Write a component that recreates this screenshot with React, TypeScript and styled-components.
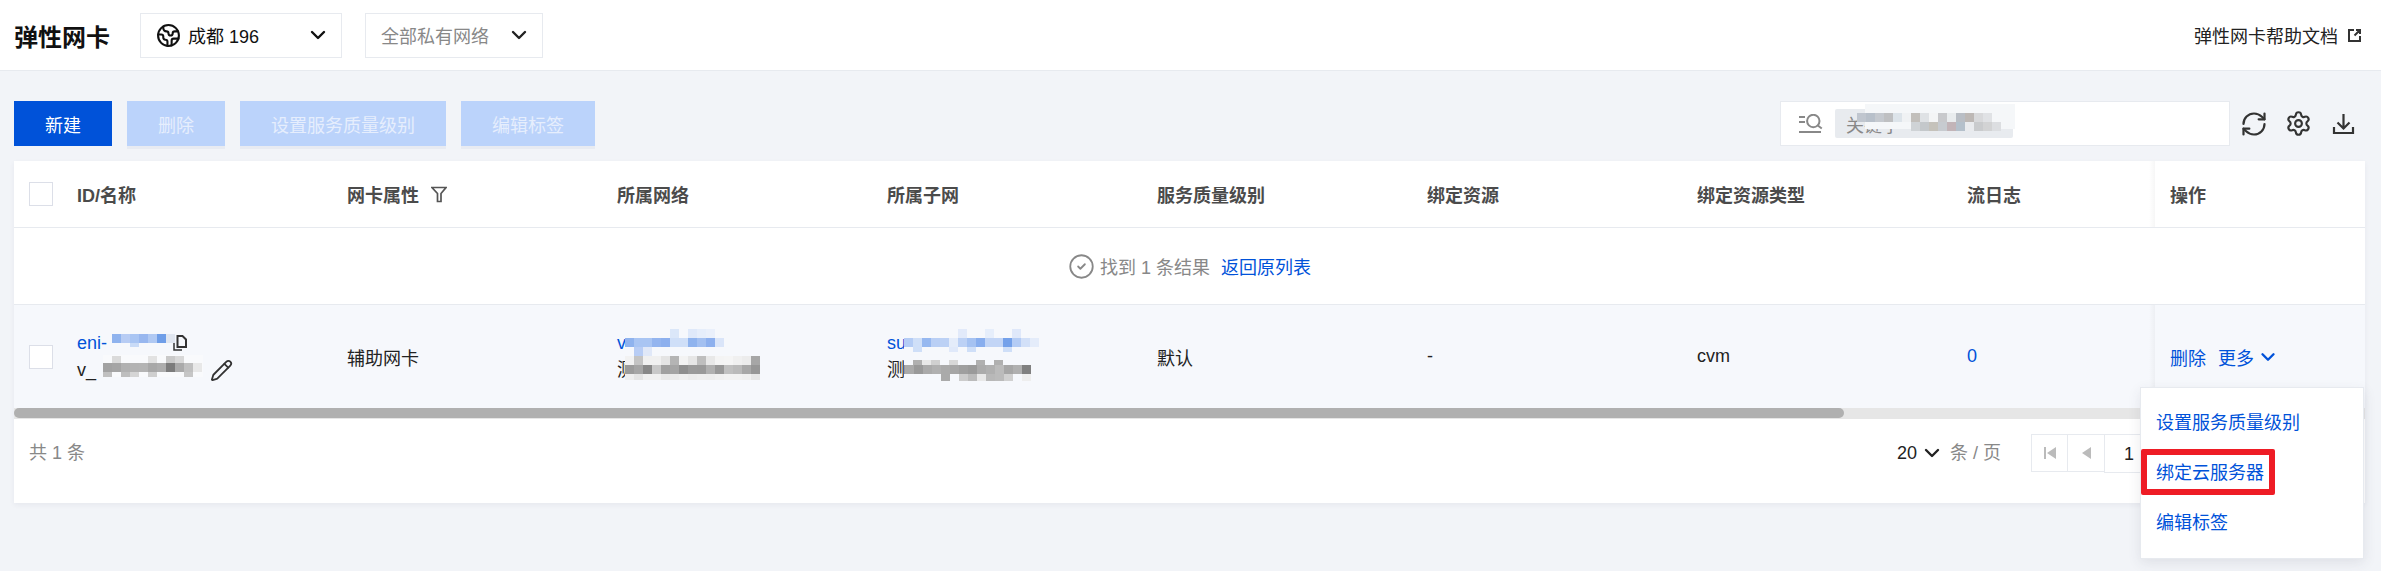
import styled, { createGlobalStyle } from 'styled-components';
import { ChevronDown, CircleCheck, Earth, Pencil, RefreshCw, Settings } from 'lucide-react';

const GlobalStyle = createGlobalStyle`
  html, body {
    margin: 0;
    padding: 0;
    height: 571px;
    overflow: hidden;
    background: #f2f4f8;
    font-family: "Liberation Sans", "Noto Sans CJK SC", sans-serif;
    font-size: 18px;
    color: #222;
  }
`

const Header = styled.header`
  display: flex;
  align-items: center;
  height: 70px;
  padding: 0 20px 0 14px;
  background: #fff;
  border-bottom: 1px solid #e7eaef;
`

const Title = styled.h1`
  margin: 0 30px 0 0;
  font-size: 24px;
  font-weight: 700;
  color: #111;
`

const Select = styled.div<{ $width: number; $muted?: boolean }>`
  display: flex;
  align-items: center;
  justify-content: space-between;
  box-sizing: border-box;
  width: ${p => p.$width}px;
  height: 45px;
  margin-right: 23px;
  padding: 0 11px 0 15px;
  background: #fff;
  border: 1px solid #e7eaef;
  color: ${p => (p.$muted ? '#888' : '#111')};
`

const SelectLabel = styled.span`
  display: flex;
  align-items: center;
  gap: 7px;
`

const HelpLink = styled.a`
  display: flex;
  align-items: center;
  gap: 10px;
  margin-left: auto;
  color: #222;
`

const Main = styled.main`
  padding: 30px 16px 0 14px;
`

const Toolbar = styled.div`
  display: flex;
  justify-content: space-between;
  margin-bottom: 15px;
`

const ButtonGroup = styled.div`
  display: flex;
  gap: 15px;
`

const Button = styled.button<{ $width: number; $disabled?: boolean }>`
  width: ${p => p.$width}px;
  height: 45px;
  padding: 0;
  border: 0;
  font: inherit;
  color: ${p => (p.$disabled ? '#e6eefd' : '#fff')};
  background: ${p => (p.$disabled ? '#bbd3fb' : '#0052d9')};
  box-shadow: ${p => (p.$disabled ? '0 3px 0 #e8ebf2' : 'none')};
`

const ToolRight = styled.div`
  display: flex;
  align-items: center;
  padding-right: 10px;
`

const SearchBox = styled.div`
  position: relative;
  display: flex;
  align-items: center;
  box-sizing: border-box;
  width: 450px;
  height: 45px;
  margin-right: 12px;
  padding-left: 18px;
  background: #fff;
  border: 1px solid #e7eaef;
  color: #888;
`

const SearchPatch = styled.span`
  display: flex;
  align-items: center;
  box-sizing: border-box;
  width: 178px;
  height: 29px;
  margin-left: 12px;
  padding-left: 11px;
  background: #e8ebef;
  border-radius: 2px;
  overflow: hidden;
`

const ToolIcons = styled.div`
  display: flex;
  gap: 22px;
  color: #333;
`

const ToolIcon = styled.span`
  display: flex;
  align-items: center;
  justify-content: center;
  width: 23px;
  height: 23px;

  svg {
    flex: none;
  }
`

const TableCard = styled.section`
  position: relative;
  background: #fff;
  box-shadow: 0 2px 5px rgba(54, 58, 80, 0.06);
`

const GridRow = styled.div<{ $height: number; $tint?: boolean }>`
  display: grid;
  grid-template-columns: 48px repeat(7, 270px) 203px 210px;
  align-items: stretch;
  height: ${p => p.$height}px;
  background: ${p => (p.$tint ? '#f6f8fc' : '#fff')};
`

const BorderedRow = styled(GridRow)`
  border-bottom: 1px solid #e7eaef;
`

const HeadCell = styled.div`
  display: flex;
  align-items: center;
  gap: 12px;
  padding-left: 15px;
  font-weight: 700;
  color: #4b4b4b;
`

const Cell = styled.div`
  display: flex;
  align-items: center;
  padding-left: 15px;
  color: #222;
`

const Stack = styled.div`
  position: relative;
  display: flex;
  flex-direction: column;
  line-height: 27px;
`

const Line = styled.div`
  display: flex;
  align-items: center;
  height: 27px;
`

const Spacer = styled.span<{ $width: number }>`
  display: inline-block;
  width: ${p => p.$width}px;
`

const LinkText = styled.a`
  color: #0052d9;
`

const CheckCell = styled.div`
  display: flex;
  align-items: center;
  padding-left: 15px;
`

const Checkbox = styled.span`
  box-sizing: border-box;
  width: 24px;
  height: 24px;
  background: #fff;
  border: 1px solid #dcdfe8;
`

const FixedCell = styled.div`
  position: relative;
  display: flex;
  align-items: center;
  padding-left: 15px;
  color: #0052d9;

  &::before {
    content: '';
    position: absolute;
    top: 0;
    bottom: 0;
    left: -6px;
    width: 6px;
    background: linear-gradient(to left, rgba(0, 0, 0, 0.035), rgba(0, 0, 0, 0));
  }
`

const FixedHead = styled(FixedCell)`
  font-weight: 700;
  color: #4b4b4b;
`

const ActionLink = styled.a`
  display: flex;
  align-items: center;
  gap: 3px;
  margin-right: 12px;
`

const ResultRow = styled.div`
  display: flex;
  align-items: center;
  justify-content: center;
  height: 76px;
  background: #fff;
  border-bottom: 1px solid #e7eaef;
  color: #888;
`

const ResultText = styled.span`
  margin: 0 11px 0 5px;
`

const ScrollTrack = styled.div`
  height: 11px;
  background: #e6e6e6;
`

const ScrollThumb = styled.div`
  width: 1830px;
  height: 10px;
  background: #b0b0b0;
  border-radius: 5px;
`

const Footer = styled.div`
  display: flex;
  align-items: flex-start;
  box-sizing: border-box;
  justify-content: space-between;
  height: 84px;
  padding: 15px 167px 0 15px;
  color: #888;
  line-height: 38px;
`

const Pager = styled.div`
  display: flex;
  align-items: flex-start;
`

const PageSize = styled.span`
  display: flex;
  align-items: center;
  gap: 3px;
  height: 38px;
  margin-right: 6px;
  color: #222;
`

const PageUnit = styled.span`
  margin-right: 31px;
`

const PageBox = styled.span<{ $width: number; $active?: boolean }>`
  display: flex;
  align-items: center;
  justify-content: center;
  box-sizing: border-box;
  width: ${p => p.$width}px;
  height: ${p => (p.$active ? 39 : 38)}px;
  margin-left: -1px;
  border: 1px solid #e7eaef;
  color: #222;
  background: #fff;

  &:first-of-type {
    margin-left: 0;
  }
`

const PageNumber = styled.span`
  margin-right: 8px;
`

const Menu = styled.div`
  position: absolute;
  top: 226px;
  right: 1px;
  box-sizing: border-box;
  width: 224px;
  height: 172px;
  padding: 10px 0;
  background: #fff;
  border: 1px solid #e7eaef;
  box-shadow: 0 4px 12px rgba(54, 58, 80, 0.1);
  z-index: 2;
`

const MenuItem = styled.div`
  position: relative;
  height: 50px;
  padding-left: 15px;
  line-height: 50px;
  color: #0052d9;
`

const RedBox = styled.span`
  position: absolute;
  top: 1px;
  left: 0;
  box-sizing: border-box;
  width: 134px;
  height: 46px;
  border: 6px solid #ee1c25;
  border-radius: 2px;
`

const MosaicSvg = styled.svg<{ $left: number; $top: number }>`
  position: absolute;
  left: ${p => p.$left}px;
  top: ${p => p.$top}px;
`

type MosaicCell = [number, number, number, number, string]

// a row of 9px blocks starting at col, '' leaves the block out
const strip = (y: number, h: number, col: number, colors: string[]): MosaicCell[] =>
  colors.flatMap((c, i) => (c ? [[col + i * 9, y, 9, h, c] as MosaicCell] : []))

const Mosaic = ({ left, top, width, height, cells }: { left: number; top: number; width: number; height: number; cells: MosaicCell[] }) => (
  <MosaicSvg $left={left} $top={top} width={width} height={height} aria-hidden="true">
    {cells.map(([x, y, w, h, fill], i) => <rect key={i} x={x} y={y} width={w} height={h} fill={fill} />)}
  </MosaicSvg>
)

const searchCells: MosaicCell[] = [
  [84, 2, 150, 25, '#f5f7f9'],
  ...strip(11, 9, 76, ['#c0c6cf', '#b8c0ca', '#c5c9cf', '#bfc0c2', '#dde4ea', '#f0f2f4', '#c2bfbb', '#dfe2e5', '#f4f5f6', '#c8c9cc', '#e9ecee', '#b9bec5', '#bdb8b5', '#d8d9db', '#e0e2e5']),
  ...strip(20, 9, 130, ['#cfd3d6', '#c4c8cb', '#c5c2bb', '#c7cbd0', '#c2b4b8', '#b4c0cb', '#e9ebee', '#c9cbcd', '#d2d3d4', '#dcdee1']),
]

const eniCells: MosaicCell[] = [
  ...strip(4, 9, 0, ['#8fb3ee', '#b7ccf4', '#a9c5f3', '#98b7ef', '#b0c9f3', '#6f9ee8', '#e0e6f0']),
  ...strip(13, 4, 18, ['#c9dbf7']),
]

const nameCells: MosaicCell[] = [
  [0, 0, 100, 22, '#f9fafc'],
  ...strip(1, 7, 9, ['#dadada', '', '', '', '#e2e2e2', '', '#c9c9c9', '#d8d8d8']),
  ...strip(8, 9, 0, ['#a2a2a2', '#a5a5a5', '#b1b1b1', '#b3b3b3', '#b4b4b4', '#a8a8a8', '#adadad', '#7c7c7c', '#aaaaaa', '#c0c0c0', '#e8e8e8']),
  ...strip(17, 5, 0, ['#c0c0c0', '', '#bebebe', '#d5d5d5', '', '#cfcfcf', '', '', '', '#c6c6c6']),
]

const vpcCells: MosaicCell[] = [
  [0, 0, 136, 52, '#f6f8fc'],
  ...strip(0, 9, 45, ['#dbe7f9', '', '#dfe9fa', '#e6eefb', '#eaf0fb']),
  ...strip(9, 9, 0, ['#8fb3ee', '#a9c5f3', '#a9c5f3', '#94b5ef', '#8db0ee', '#cfdff8', '#cfdff8', '#8fb3ee', '#a3c0f1', '#8db0ee', '#dae5f9']),
  ...strip(18, 9, 9, ['#b8cdf5', '#e0e8f8']),
  ...strip(27, 9, 0, ['#f2f2f2', '#c4c4c4', '#f0f0f0', '#f0f0f0', '#e4e4e4', '#b4b4b4', '#f3f3f3', '#e6e6e6', '#bebebe', '#e8e8e8', '#f4f4f4', '#f5f5f5', '#f0f0f0', '#ececec', '#a6a6a6']),
  ...strip(36, 9, 0, ['#9b9b9b', '#a5a5a5', '#888888', '#c8c8c8', '#a0a0a0', '#a5a5a5', '#8f8f8f', '#9a9a9a', '#999999', '#b0b0b0', '#989898', '#c0c0c0', '#bababa', '#a8a8a8', '#969696']),
  ...strip(45, 6, 0, ['#eeeeee', '#e4e4e4', '#f0f0f0', '#f0f0f0', '#e8e8e8', '#ececec', '#f0f0f0', '#ececec', '#eeeeee', '#ededed', '#f0f0f0', '#f2f2f2', '#f2f2f2', '#f0f0f0', '#e6e6e6']),
]

const subnetCells: MosaicCell[] = [
  [0, 0, 136, 52, '#f6f8fc'],
  ...strip(0, 9, 54, ['#e2eafa', '', '', '#e6eefb', '', '', '#dfe8fa']),
  ...strip(9, 9, 0, ['#b4ccf5', '#cfdff8', '#96b8f0', '#b9cff5', '#bcd1f5', '#e4ecfa', '#bcd1f5', '#a5c2f2', '#88aeee', '#c2d5f6', '#c2d5f6', '#74a1ea', '#b4ccf5', '#d2e0f8', '#e4ecfa']),
  ...strip(18, 5, 9, ['#cfdff8', '', '', '', '#e0e9fa', '', '#cfdff8', '', '', '', '#cfdff8']),
  ...strip(31, 5, 9, ['#b0b0b0', '#e8e8e8', '#d0d0d0', '', '#d8d8d8', '', '', '#b0b0b0', '', '#b0b0b0']),
  ...strip(36, 9, -8, ['#999999', '#aaaaaa', '#999999', '#aaaaaa', '#b0b0b0', '#aaaaaa', '#a6a6a6', '#9f9f9f', '#9a9a9a', '#ababab', '#b0b0b0', '#bbbbbb', '#a6a6a6', '#b0b0b0', '#808080']),
  ...strip(45, 7, 37, ['#aaaaaa', '', '#cccccc', '#bbbbbb', '#e8e8e8', '#b8b8b8', '#bbbbbb', '#d0d0d0', '', '#eeeeee']),
]

const SearchIcon = () => (
  <svg width="24" height="20" viewBox="0 0 24 20" fill="none" stroke="#888" strokeWidth="2">
    <path d="M0 3h6M0 8h6M0 18h22" />
    <circle cx="14.3" cy="7" r="6.2" />
    <path d="M18.8 11.5l4 3" />
  </svg>
)

const FilterIcon = () => (
  <svg width="16" height="17" viewBox="0 0 16 17" fill="none" stroke="#555" strokeWidth="1.7">
    <path d="M1 1.500h14l-5 6v8H6.500v-8z" />
  </svg>
)

const ExternalIcon = () => (
  <svg width="13" height="13" viewBox="0 0 13 13" fill="none" stroke="#333" strokeWidth="2">
    <path d="M6 1H1v11h11V7M6.500 6.500L12 1M8 1h4v4" />
  </svg>
)

const CopyIcon = () => (
  <svg width="14" height="16" viewBox="0 0 14 16" fill="none" stroke="#333">
    <path d="M4.500 1h5l3.500 3.500V12H4.500z" strokeWidth="2" />
    <path d="M1 8v7h8" strokeWidth="1.500" />
  </svg>
)

const DownloadIcon = () => (
  <svg width="23" height="23" viewBox="0 0 23 23" fill="none" stroke="#333" strokeWidth="2.200">
    <path d="M11.500 2v14M5.500 10.500l6 6 6-6M2 15v6h19v-6" />
  </svg>
)

const FirstIcon = () => (
  <svg width="12" height="12" viewBox="0 0 12 12" fill="#bbb">
    <rect x="0" y="0" width="2" height="12" />
    <path d="M12 0v12L3 6z" />
  </svg>
)

const PrevIcon = () => (
  <svg width="11" height="12" viewBox="0 0 11 12" fill="#bbb">
    <path d="M10 0v12L1 6z" />
  </svg>
)

const heads = ['网卡属性', '所属网络', '所属子网', '服务质量级别', '绑定资源', '绑定资源类型', '流日志']

function App() {
  return (
    <>
      <GlobalStyle />
      <Header>
        <Title>弹性网卡</Title>
        <Select $width={202}>
          <SelectLabel><Earth size={25} strokeWidth={2} />成都 196</SelectLabel>
          <ChevronDown size={24} strokeWidth={2.4} />
        </Select>
        <Select $width={178} $muted>
          全部私有网络
          <ChevronDown size={24} strokeWidth={2.4} color="#222" />
        </Select>
        <HelpLink>弹性网卡帮助文档<ExternalIcon /></HelpLink>
      </Header>
      <Main>
        <Toolbar>
          <ButtonGroup>
            <Button $width={98}>新建</Button>
            <Button $width={98} $disabled>删除</Button>
            <Button $width={206} $disabled>设置服务质量级别</Button>
            <Button $width={134} $disabled>编辑标签</Button>
          </ButtonGroup>
          <ToolRight>
            <SearchBox>
              <SearchIcon />
              <SearchPatch>关键字</SearchPatch>
              <Mosaic left={0} top={0} width={250} height={43} cells={searchCells} />
            </SearchBox>
            <ToolIcons>
              <ToolIcon><RefreshCw size={28} strokeWidth={1.9} /></ToolIcon>
              <ToolIcon><Settings size={27} strokeWidth={1.9} /></ToolIcon>
              <ToolIcon><DownloadIcon /></ToolIcon>
            </ToolIcons>
          </ToolRight>
        </Toolbar>
        <TableCard>
          <BorderedRow $height={66}>
            <CheckCell><Checkbox /></CheckCell>
            <HeadCell>ID/名称</HeadCell>
            {heads.map((h, i) => (
              <HeadCell key={h}>{h}{i === 0 && <FilterIcon />}</HeadCell>
            ))}
            <FixedHead>操作</FixedHead>
          </BorderedRow>
          <ResultRow>
            <CircleCheck size={27} strokeWidth={1.6} color="#888" />
            <ResultText>找到 1 条结果</ResultText>
            <LinkText>返回原列表</LinkText>
          </ResultRow>
          <GridRow $height={103} $tint>
            <CheckCell><Checkbox /></CheckCell>
            <Cell>
              <Stack>
                <Line><LinkText>eni-</LinkText><Spacer $width={66} /><CopyIcon /></Line>
                <Line>v_<Spacer $width={114} /><Pencil size={23} strokeWidth={1.9} color="#333" /></Line>
                <Mosaic left={35} top={0} width={66} height={20} cells={eniCells} />
                <Mosaic left={26} top={25} width={104} height={24} cells={nameCells} />
              </Stack>
            </Cell>
            <Cell>辅助网卡</Cell>
            <Cell>
              <Stack>
                <Line><LinkText>vpc-</LinkText></Line>
                <Line>测试</Line>
                <Mosaic left={8} top={-1} width={136} height={52} cells={vpcCells} />
              </Stack>
            </Cell>
            <Cell>
              <Stack>
                <Line><LinkText>subnet</LinkText></Line>
                <Line>测试</Line>
                <Mosaic left={17} top={-1} width={136} height={52} cells={subnetCells} />
              </Stack>
            </Cell>
            <Cell>默认</Cell>
            <Cell>-</Cell>
            <Cell>cvm</Cell>
            <Cell><LinkText>0</LinkText></Cell>
            <FixedCell>
              <ActionLink>删除</ActionLink>
              <ActionLink>更多<ChevronDown size={22} strokeWidth={2.6} /></ActionLink>
            </FixedCell>
          </GridRow>
          <ScrollTrack><ScrollThumb /></ScrollTrack>
          <Footer>
            <span>共 1 条</span>
            <Pager>
              <PageSize>20<ChevronDown size={24} strokeWidth={2.4} /></PageSize>
              <PageUnit>条 / 页</PageUnit>
              <PageBox $width={37}><FirstIcon /></PageBox>
              <PageBox $width={38}><PrevIcon /></PageBox>
              <PageBox $width={58} $active><PageNumber>1</PageNumber></PageBox>
              <PageBox $width={37}><PrevIcon /></PageBox>
            </Pager>
          </Footer>
          <Menu>
            <MenuItem>设置服务质量级别</MenuItem>
            <MenuItem>绑定云服务器<RedBox /></MenuItem>
            <MenuItem>编辑标签</MenuItem>
          </Menu>
        </TableCard>
      </Main>
    </>
  );
}

export default App;
